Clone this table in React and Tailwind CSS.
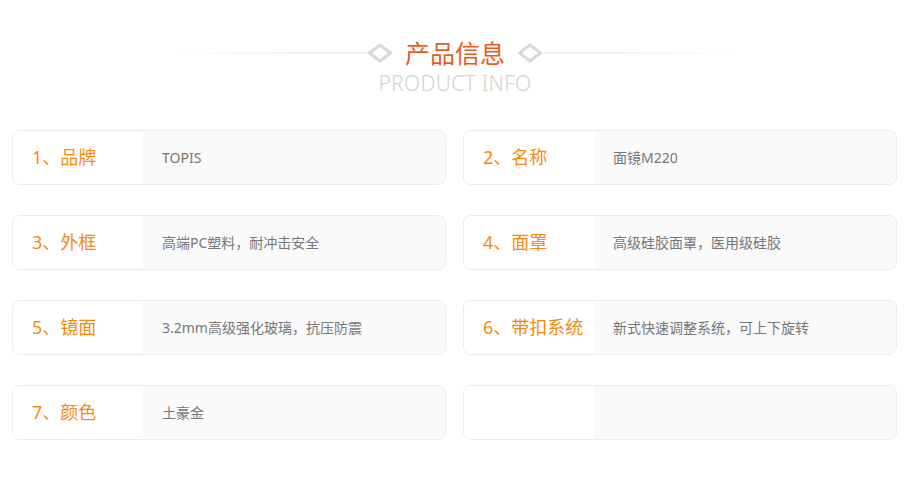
import React from "react";

const items = [
    { label: "1、品牌", value: "TOPIS" },
    { label: "2、名称", value: "面镜M220" },
    { label: "3、外框", value: "高端PC塑料，耐冲击安全" },
    { label: "4、面罩", value: "高级硅胶面罩，医用级硅胶" },
    { label: "5、镜面", value: "3.2mm高级强化玻璃，抗压防震" },
    { label: "6、带扣系统", value: "新式快速调整系统，可上下旋转" },
    { label: "7、颜色", value: "土豪金" },
    { label: "", value: "" },
];

function Diamond() {
    return (
        <svg width="26" height="20" viewBox="0 0 26 20" className="shrink-0">
            <path d="M13 2 L23.5 10 L13 18 L2.5 10 Z" fill="none" stroke="#d9d9d9" strokeWidth="3" />
        </svg>
    );
}

function App() {
    return (
        <div className="w-[910px] h-[480px] bg-white font-['Noto_Sans','Noto_Sans_CJK_SC',sans-serif]">
            {/* header */}
            <div className="pt-[37px] flex flex-col items-center">
                <div className="flex items-center h-[32px]">
                    <div className="w-[200px] h-[2px] bg-gradient-to-r from-white to-[#ececec]"></div>
                    <Diamond />
                    <h2 className="mx-[12px] text-[25px] leading-[32px] text-[#e95d1b]">产品信息</h2>
                    <Diamond />
                    <div className="w-[200px] h-[2px] bg-gradient-to-l from-white to-[#ececec]"></div>
                </div>
                <p className="text-[21px] leading-[28px] font-light tracking-[0.3px] text-[#d2d2d2]">PRODUCT INFO</p>
            </div>
            {/* items */}
            <div className="mt-[33px] pl-[12px] pr-[13px] grid grid-cols-2 gap-x-[17px] gap-y-[30px] w-[910px]">
                {items.map((item, i) => (
                    <div key={i} className="flex h-[55px] rounded-[8px] border border-[#ebebeb] overflow-hidden">
                        <div className="w-[130px] shrink-0 bg-white flex items-center pl-[19px] text-[18px] text-[#f7890f]">
                            {item.label}
                        </div>
                        <div className="flex-1 bg-[#fafafa] flex items-center pl-[19px] text-[14px] text-[#777]">
                            {item.value}
                        </div>
                    </div>
                ))}
            </div>
        </div>
    );
}

export default App;
